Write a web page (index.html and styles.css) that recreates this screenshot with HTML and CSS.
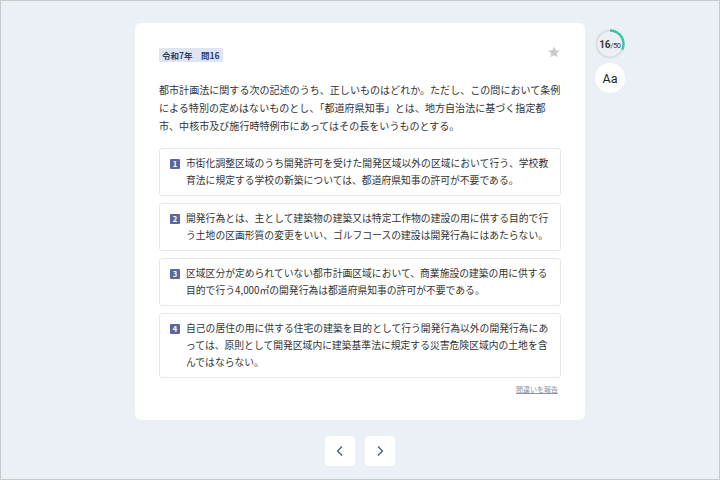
FILE: index.html
```html
<!DOCTYPE html>
<html lang="ja">
<head>
<meta charset="utf-8">
<link rel="stylesheet" href="styles.css">
</head>
<body>
<div class="frame">
  <div class="layout">
    <div class="spacer"></div>
    <main class="card">
      <div class="card-head">
        <span class="badge">令和7年　問16</span>
        <svg class="star" width="14" height="14" viewBox="0 0 24 24"><path d="M12 2.5l2.9 6.3 6.9.7-5.2 4.6 1.5 6.8L12 17.4l-6.1 3.5 1.5-6.8-5.2-4.6 6.9-.7z" fill="#cbcbcb"/></svg>
      </div>
      <p class="question">都市計画法に関する次の記述のうち、正しいものはどれか。ただし、この問において条例による特別の定めはないものとし、「都道府県知事」とは、地方自治法に基づく指定都市、中核市及び施行時特例市にあってはその長をいうものとする。</p>
      <ol class="options">
        <li class="option"><span class="num">1</span><span class="opt-text">市街化調整区域のうち開発許可を受けた開発区域以外の区域において行う、学校教育法に規定する学校の新築については、都道府県知事の許可が不要である。</span></li>
        <li class="option"><span class="num">2</span><span class="opt-text">開発行為とは、主として建築物の建築又は特定工作物の建設の用に供する目的で行う土地の区画形質の変更をいい、ゴルフコースの建設は開発行為にはあたらない。</span></li>
        <li class="option"><span class="num">3</span><span class="opt-text">区域区分が定められていない都市計画区域において、商業施設の建築の用に供する目的で行う4,000㎡の開発行為は都道府県知事の許可が不要である。</span></li>
        <li class="option"><span class="num">4</span><span class="opt-text">自己の居住の用に供する住宅の建築を目的として行う開発行為以外の開発行為にあっては、原則として開発区域内に建築基準法に規定する災害危険区域内の土地を含んではならない。</span></li>
      </ol>
      <div class="report-row"><a class="report" href="#">間違いを報告</a></div>
    </main>
    <aside class="side">
      <div class="ring">
        <svg width="30" height="30" viewBox="0 0 30 30"><circle cx="15" cy="15" r="13.5" fill="none" stroke="#dedede" stroke-width="2"/><circle cx="15" cy="15" r="13.5" fill="none" stroke="#3ec6a2" stroke-width="2.4" stroke-dasharray="27.1 100" transform="rotate(-90 15 15)"/></svg>
        <span class="ring-label"><b>16</b><small>/50</small></span>
      </div>
      <div class="font-btn">Aa</div>
    </aside>
  </div>
  <nav class="nav">
    <button class="nav-btn"><svg width="12" height="12" viewBox="0 0 12 12"><path d="M8 1.5L3.5 6 8 10.5" fill="none" stroke="#4b5473" stroke-width="1.3"/></svg></button>
    <button class="nav-btn"><svg width="12" height="12" viewBox="0 0 12 12"><path d="M4 1.5L8.5 6 4 10.5" fill="none" stroke="#4b5473" stroke-width="1.3"/></svg></button>
  </nav>
</div>
</body>
</html>
```

FILE: styles.css
```css
* { box-sizing: border-box; }
html, body { margin: 0; padding: 0; }
body {
  font-family: "Noto Sans CJK JP", "Noto Sans", sans-serif;
  color: #333;
  background: #ebf0f7;
}
.frame {
  width: 720px;
  height: 480px;
  border: 1px solid #c9c9c9;
  background: #ebf0f7;
  padding-top: 22px;
}
.layout {
  display: grid;
  grid-template-columns: 1fr 450px 1fr;
}
.card {
  background: #fff;
  border-radius: 6px;
  padding: 25px 24px 24px;
  height: 397px;
}
.card-head {
  display: flex;
  justify-content: space-between;
  align-items: flex-start;
}
.badge {
  background: #dfe5f2;
  color: #2f3d6c;
  font-size: 8.5px;
  font-weight: 700;
  padding: 1px 3px;
  line-height: 12px;
  border-radius: 1px;
}
.star { margin-top: -3px; }
.question {
  margin: 19px 0 13px;
  font-size: 10.05px;
  line-height: 18px;
}
.options {
  list-style: none;
  margin: 0;
  padding: 0;
  display: flex;
  flex-direction: column;
  gap: 7px;
}
.option {
  display: flex;
  gap: 6px;
  border: 1px solid #e4e8ee;
  border-radius: 3px;
  padding: 6px 8px 6px 10px;
  font-size: 9.8px;
  line-height: 17px;
}
.num {
  flex: none;
  width: 10px;
  height: 10px;
  margin-top: 3.5px;
  background: #5a68a0;
  color: #fff;
  font-size: 7.5px;
  font-weight: 700;
  line-height: 10px;
  text-align: center;
  border-radius: 1px;
}
.report-row {
  display: flex;
  justify-content: flex-end;
  margin-top: 6px;
  padding-right: 3px;
}
.report {
  font-size: 7px;
  color: #8d929c;
  text-decoration: underline;
}
.side {
  padding: 6px 0 0 10px;
  display: flex;
  flex-direction: column;
  gap: 4px;
}
.ring {
  position: relative;
  width: 30px;
  height: 30px;
}
.ring svg { display: block; }
.ring-label {
  position: absolute;
  inset: 0;
  display: flex;
  align-items: center;
  justify-content: center;
  font-family: Roboto, "Noto Sans", sans-serif;
  color: #3a3a3a;
  letter-spacing: -0.3px;
}
.ring-label b { font-size: 10px; font-weight: 700; }
.ring-label small { font-size: 7.5px; margin-top: 2px; }
.font-btn {
  width: 30px;
  height: 30px;
  border-radius: 50%;
  background: #fff;
  display: flex;
  align-items: center;
  justify-content: center;
  font-family: Roboto, "Noto Sans", sans-serif;
  font-size: 12.5px;
  color: #222;
}
.nav {
  display: flex;
  justify-content: center;
  gap: 10px;
  margin-top: 16px;
}
.nav-btn {
  width: 30px;
  height: 30px;
  border: none;
  border-radius: 4px;
  background: #fff;
  display: flex;
  align-items: center;
  justify-content: center;
  padding: 0;
}
```
